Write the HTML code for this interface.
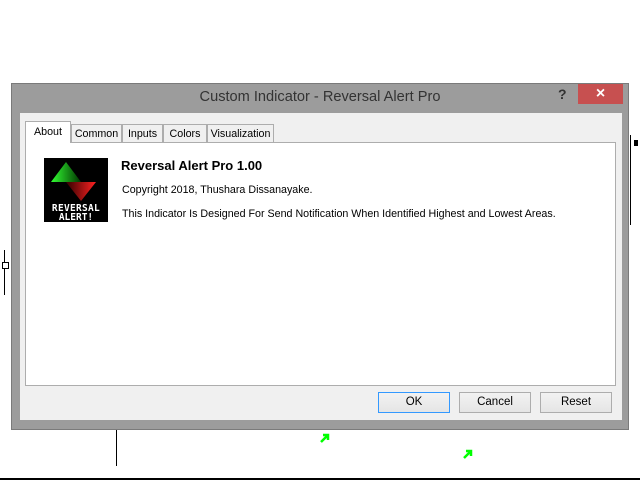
<!DOCTYPE html>
<html><head><style>
body{margin:0;width:640px;height:480px;background:#fff;position:relative;overflow:hidden;font-family:"Liberation Sans",sans-serif;font-size:12px;color:#000}
.a{position:absolute}
.tab{position:absolute;top:124px;height:18px;border:1px solid #adadad;border-bottom:none;background:#f0f0f0;font-size:10.7px;line-height:18px;text-align:center;box-sizing:border-box}
.btn{position:absolute;top:392px;width:72px;height:21px;border:1px solid #adadad;background:linear-gradient(#f2f2f2,#e5e5e5);box-sizing:border-box;text-align:center;line-height:19px;font-size:11.5px}
</style></head><body>
<div class="a" style="left:11px;top:83px;width:618px;height:347px;background:#9c9c9c;border:1px solid #7a7a7a;box-sizing:border-box"></div>
<div class="a" style="left:11px;top:89px;width:618px;text-align:center;font-size:14.6px;color:#333">Custom Indicator - Reversal Alert Pro</div>
<div class="a" style="left:558px;top:86px;font-size:14px;font-weight:bold;color:#333">?</div>
<div class="a" style="left:578px;top:84px;width:45px;height:20px;background:#c75050;color:#fff;text-align:center;font-size:16px;line-height:20px;font-weight:bold">×</div>
<div class="a" style="left:20px;top:113px;width:602px;height:307px;background:#f0f0f0"></div>
<div class="a" style="left:25px;top:142px;width:591px;height:244px;background:#fff;border:1px solid #adadad;box-sizing:border-box"></div>
<div class="tab" style="left:71px;width:51px">Common</div>
<div class="tab" style="left:122px;width:41px">Inputs</div>
<div class="tab" style="left:163px;width:44px">Colors</div>
<div class="tab" style="left:207px;width:67px">Visualization</div>
<div class="tab" style="left:25px;top:121px;height:22px;width:46px;background:#fff;line-height:20px">About</div>
<div class="a" style="left:44px;top:158px;width:64px;height:64px;background:#000">
<svg width="64" height="64"><defs><linearGradient id="g" x1="0" x2="1"><stop offset="0" stop-color="#3f3"/><stop offset="1" stop-color="#030"/></linearGradient><linearGradient id="r" x1="0" x2="1"><stop offset="0" stop-color="#300"/><stop offset="1" stop-color="#f22"/></linearGradient></defs>
<polygon points="7,24 22,4 37,24" fill="url(#g)"/><polygon points="22,24 52,24 37,43" fill="url(#r)"/>
<text x="32" y="53" font-size="9.5" font-weight="bold" fill="#fff" text-anchor="middle" font-family="DejaVu Sans Mono" letter-spacing="0.3">REVERSAL</text>
<text x="32" y="62" font-size="9.5" font-weight="bold" fill="#fff" text-anchor="middle" font-family="DejaVu Sans Mono">ALERT!</text></svg></div>
<div class="a" style="left:121px;top:158px;font-size:13px;font-weight:bold">Reversal Alert Pro 1.00</div>
<div class="a" style="left:122px;top:184px;font-size:10.7px">Copyright 2018, Thushara Dissanayake.</div>
<div class="a" style="left:122px;top:208px;font-size:10.7px">This Indicator Is Designed For Send Notification When Identified Highest and Lowest Areas.</div>
<div class="btn" style="left:378px;border-color:#3399ff">OK</div>
<div class="btn" style="left:459px">Cancel</div>
<div class="btn" style="left:540px">Reset</div>
<div class="a" style="left:116px;top:430px;width:1px;height:36px;background:#000"></div>
<div class="a" style="left:0;top:478px;width:640px;height:2px;background:#000"></div>
<div class="a" style="left:4px;top:250px;width:1px;height:45px;background:#000"></div>
<div class="a" style="left:2px;top:262px;width:5px;height:5px;border:1px solid #000;background:#fff"></div>
<div class="a" style="left:630px;top:135px;width:1px;height:90px;background:#000"></div>
<div class="a" style="left:634px;top:140px;width:4px;height:6px;background:#000"></div>
<svg class="a" style="left:319px;top:432px" width="12" height="12"><path d="M2 10 L9 3 M4 3 H9 V8" stroke="#0f0" stroke-width="2.5" fill="none"/></svg>
<svg class="a" style="left:462px;top:448px" width="12" height="12"><path d="M2 10 L9 3 M4 3 H9 V8" stroke="#0f0" stroke-width="2.5" fill="none"/></svg>
</body></html>
